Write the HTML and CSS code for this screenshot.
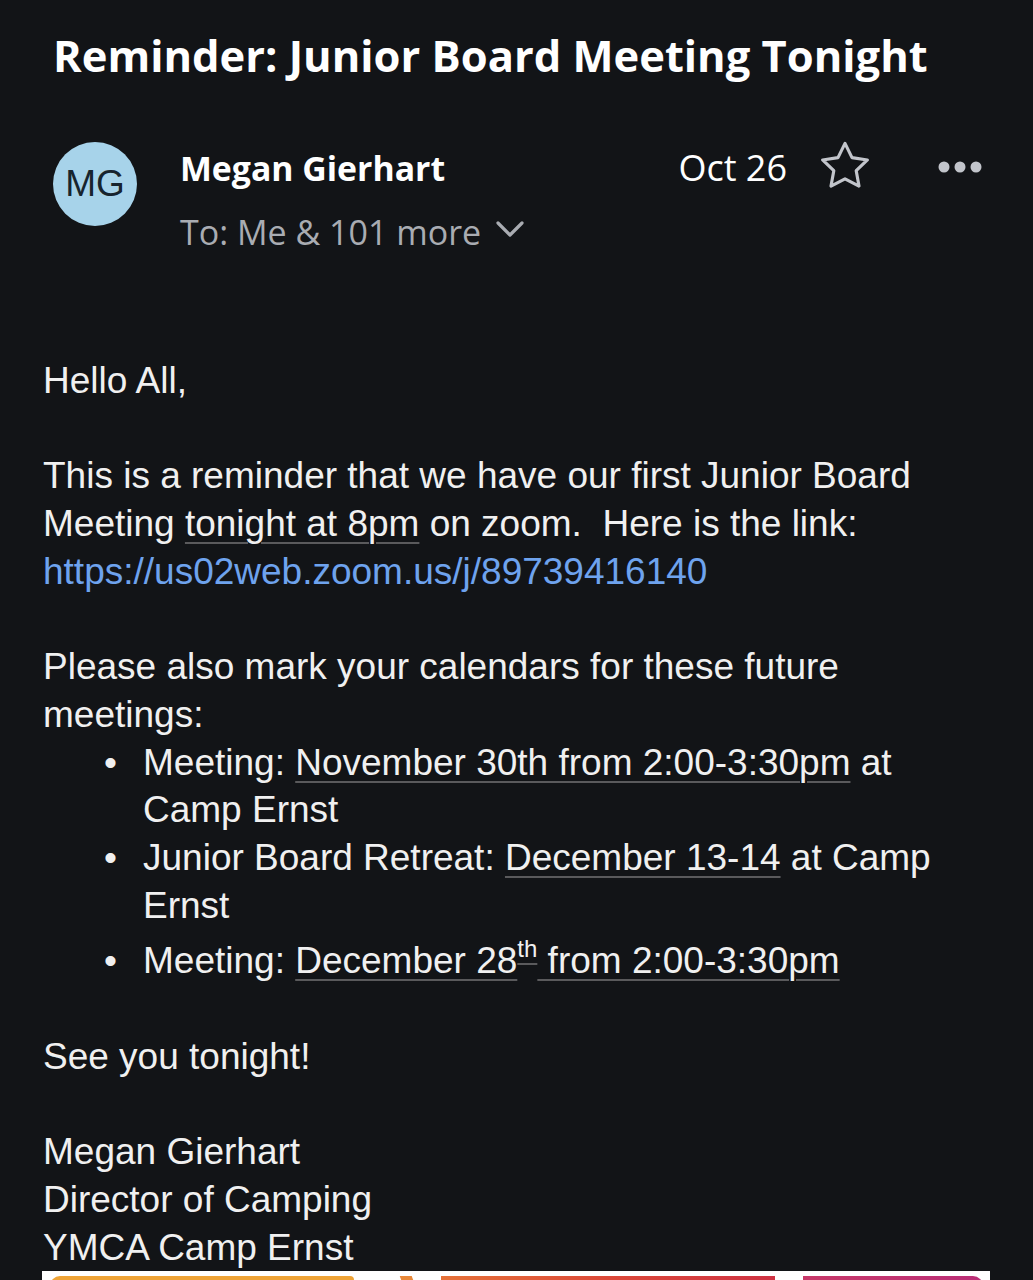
FILE: index.html
```html
<!DOCTYPE html>
<html>
<head>
<meta charset="utf-8">
<link rel="stylesheet" href="styles.css">
</head>
<body>
<div class="page">
  <h1 class="subject">Reminder: Junior Board Meeting Tonight</h1>
  <div class="header">
    <div class="avatar">MG</div>
    <div class="meta">
      <div class="row1">
        <span class="name">Megan Gierhart</span>
        <span class="date">Oct 26</span>
        <svg class="star" width="56" height="56" viewBox="0 0 24 24"><polygon points="12,2.3 15.0,8.4 21.6,9.4 16.8,14.0 18.0,20.6 12,17.5 6.0,20.6 7.2,14.0 2.4,9.4 9.0,8.4" fill="none" stroke="#c2c5cb" stroke-width="1.35" stroke-linejoin="round"/></svg>
        <svg class="dots" width="48" height="16" viewBox="0 0 48 16"><circle cx="8" cy="8" r="5.5" fill="#c2c5cb"/><circle cx="24" cy="8" r="5.5" fill="#c2c5cb"/><circle cx="40" cy="8" r="5.5" fill="#c2c5cb"/></svg>
      </div>
      <div class="to">To: Me &amp; 101 more <svg class="chev" width="30" height="20" viewBox="0 0 30 20"><polyline points="3,4 15,16 27,4" fill="none" stroke="#a9acb2" stroke-width="3.2" stroke-linecap="round" stroke-linejoin="round"/></svg></div>
    </div>
  </div>
  <div class="body">
    <p>Hello All,</p>
    <p>This is a reminder that we have our first Junior Board Meeting <span class="u">tonight at 8pm</span> on zoom.&nbsp; Here is the link: <a class="link">https://us02web.zoom.us/j/89739416140</a></p>
    <p class="tight">Please also mark your calendars for these future meetings:</p>
    <ul>
      <li>Meeting: <span class="u">November 30th from 2:00-3:30pm</span> at Camp Ernst</li>
      <li>Junior Board Retreat: <span class="u">December 13-14</span> at Camp Ernst</li>
      <li class="last">Meeting: <span class="u">December 28</span><sup class="u">th</sup><span class="u"> from 2:00-3:30pm</span></li>
    </ul>
    <p>See you tonight!</p>
    <p class="sig">Megan Gierhart<br>Director of Camping<br>YMCA Camp Ernst</p>
  </div>
  <div class="banner">
    <div class="seg orange"></div>
    <div class="seg slash"></div>
    <div class="seg red"></div>
    <div class="seg magenta"></div>
  </div>
</div>
</body>
</html>
```
FILE: styles.css
```css
html, body {
  margin: 0;
  padding: 0;
  background: #121417;
}
.page {
  width: 1033px;
  height: 1280px;
  overflow: hidden;
  background: #121417;
  color: #f0f0f0;
}
.subject {
  margin: 0;
  padding: 27px 0 0 53px;
  font-family: "Open Sans", sans-serif;
  font-weight: 700;
  font-size: 43.5px;
  line-height: 58px;
  color: #ffffff;
  letter-spacing: 0;
}
.header {
  display: flex;
  padding: 55px 49px 0 53px;
}
.avatar {
  width: 84px;
  height: 84px;
  border-radius: 50%;
  background: #a7d3ea;
  color: #17242e;
  font-family: "Liberation Sans", Arial, sans-serif;
  font-size: 37px;
  display: flex;
  align-items: center;
  justify-content: center;
  flex-shrink: 0;
  margin-top: 2px;
}
.meta {
  flex: 1;
  margin-left: 43px;
}
.row1 {
  display: flex;
  align-items: center;
  height: 56px;
}
.name {
  flex: 1;
  font-family: "Open Sans", sans-serif;
  font-weight: 700;
  font-size: 33.8px;
  color: #ffffff;
  margin-top: 0;
}
.date {
  font-family: "Open Sans", sans-serif;
  font-size: 36px;
  color: #ffffff;
  margin-right: 30px;
  margin-top: -2px;
}
.star {
  display: block;
  margin-right: 63px;
  margin-top: -4px;
}
.dots {
  display: block;
  margin-top: -2px;
}
.to {
  font-family: "Open Sans", sans-serif;
  font-size: 34px;
  color: #a9acb2;
  margin-top: 13px;
  display: flex;
  align-items: center;
}
.chev {
  margin-left: 14px;
  margin-top: -6px;
}
.body {
  padding: 102px 60px 0 43px;
  font-family: "Liberation Sans", Arial, sans-serif;
  font-size: 37px;
  line-height: 47.7px;
  color: #f0f0f0;
}
.body p {
  margin: 0 0 47.7px 0;
}
.body p.tight {
  margin-bottom: 0;
}
.body p.sig {
  margin-bottom: 0;
}
.body ul {
  margin: 0 0 47.7px 0;
  padding-left: 100px;
  list-style: none;
}
.body li::before {
  content: "\2022";
  display: inline-block;
  width: 38px;
  margin-left: -38px;
  text-indent: -1px;
}
.u {
  text-decoration: underline;
  text-decoration-color: #5a5a5c;
  text-decoration-thickness: 2px;
  text-underline-offset: 6px;
}
.link {
  color: #6ea3ee;
}
sup {
  font-size: 24px;
  line-height: 0;
  vertical-align: 16px;
}
.body li.last {
  padding-top: 8px;
}
.banner {
  margin: 0 43px 0 42px;
  height: 30px;
  background: #ffffff;
  display: flex;
  padding: 5px 7px 0 8px;
  box-sizing: border-box;
}
.seg {
  height: 40px;
}
.orange {
  width: 305px;
  background: #efa437;
  border-top-left-radius: 10px;
  border-top-right-radius: 4px;
}
.slash {
  width: 12px;
  margin-left: 53px;
  background: #e9893a;
  transform: skewX(20deg);
}
.red {
  width: 335px;
  margin-left: 22px;
  background: linear-gradient(90deg, #e6733a, #dc4a3a 50%, #cf3344);
}
.magenta {
  width: 180px;
  margin-left: 28px;
  background: linear-gradient(90deg, #c83a6a, #bb2f78);
  border-top-right-radius: 10px;
}
```
